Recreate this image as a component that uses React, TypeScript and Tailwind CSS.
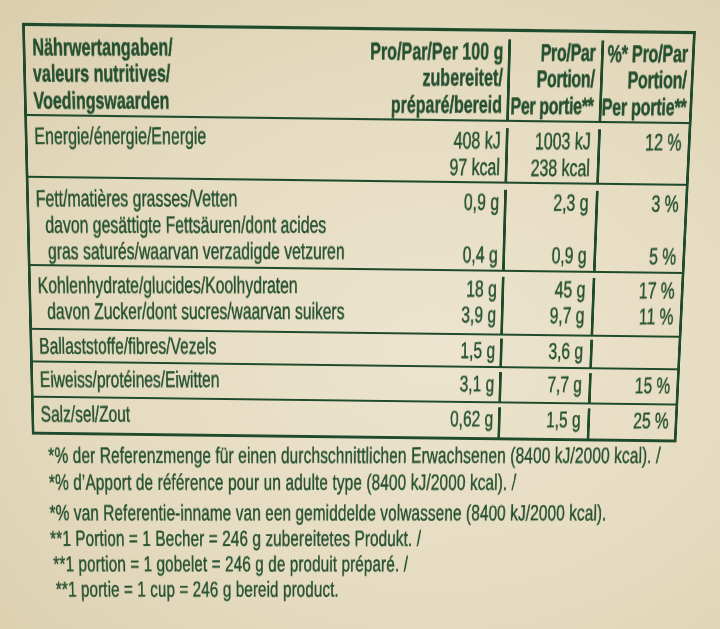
import type { ReactNode } from "react";

type Cell = (string | null)[];

type RowProps = {
  box: string; // height + padding classes
  label: ReactNode[];
  v1: Cell;
  v2: Cell;
  v3: Cell;
  last?: boolean;
};

// the label is photographed at a slant and set in a condensed face, so the
// whole sheet is laid out wide and squeezed / tilted by one transform.
// text lines are turned back so that only the rules keep the tilt.
const line = "whitespace-nowrap leading-[25.7px] rotate-[-0.48deg]";
const rule = "border-[#1f4b2c]";

const Lines = ({ items }: { items: Cell }) => (
  <>
    {items.map((t, i) => (
      <div key={i} className={line}>
        {t ?? "\u00a0"}
      </div>
    ))}
  </>
);

function Row({ box, label, v1, v2, v3, last }: RowProps) {
  return (
    <div className={`flex ${box} ${last ? "" : `border-b-2 ${rule}`}`}>
      <div className="flex w-[690px] justify-between pl-[10px] pr-[7px]">
        <div>
          {label.map((l, i) => (
            <div key={i} className={line}>
              {l}
            </div>
          ))}
        </div>
        <div className="text-right">
          <Lines items={v1} />
        </div>
      </div>
      <div className={`w-[133px] border-l-[4px] ${rule} pr-[10px] text-right`}>
        <Lines items={v2} />
      </div>
      <div className={`w-[130px] border-l-[4px] ${rule} pr-[9px] text-right`}>
        <Lines items={v3} />
      </div>
    </div>
  );
}

const notes = [
  { t: "*% der Referenzmenge für einen durchschnittlichen Erwachsenen (8400 kJ/2000 kcal). /", cls: "" },
  { t: "*% d\u2019Apport de référence pour un adulte type (8400 kJ/2000 kcal). /", cls: "mt-[1.5px]" },
  { t: "*% van Referentie-inname van een gemiddelde volwassene (8400 kJ/2000 kcal).", cls: "mt-[5px]" },
  { t: "**1 Portion = 1 Becher = 246 g zubereitetes Produkt. /", cls: "mt-[0.5px]" },
  { t: "**1 portion = 1 gobelet = 246 g de produit préparé. /", cls: "mt-[0.5px] pl-[4px]" },
  { t: "**1 portie = 1 cup = 246 g bereid product.", cls: "mt-[0.5px] pl-[7px]" },
];

export default function App() {
  return (
    <div className="h-[629px] w-[720px] overflow-hidden bg-[#e5dbc0] bg-[radial-gradient(ellipse_at_60%_55%,#ece4ce_0%,#e5dbc0_55%,#dacead_100%)] [font-family:'Liberation_Sans',Arial,sans-serif] text-[#24502f] [-webkit-text-stroke:0.45px_#24502f]">
      <div className="ml-[-170px] h-[629px] w-[1060px] pl-[43px] pt-[34px] [transform:perspective(1000px)_rotate(0.7deg)_rotateX(-6.2deg)_scaleX(0.68)]">
        <div className={`w-[961px] border-x-[4px] border-y-[3px] ${rule} text-[23px]`}>
          {/* header */}
          <div className={`flex h-[86px] border-b-2 ${rule} pt-[6.6px] font-bold`}>
            <div className="flex w-[690px] justify-between pl-[10px] pr-[7px]">
              <div>
                <div className={line}>Nährwertangaben/</div>
                <div className={line}>valeurs nutritives/</div>
                <div className={line}>Voedingswaarden</div>
              </div>
              <div className="text-right">
                <div className={line}>Pro/Par/Per 100 g</div>
                <div className={line}>zubereitet/</div>
                <div className={line}>préparé/bereid</div>
              </div>
            </div>
            <div className={`w-[133px] border-l-[4px] ${rule} pr-[8px] text-right tracking-[-0.5px]`}>
              <div className={line}>Pro/Par</div>
              <div className={line}>Portion/</div>
              <div className={line}>Per portie**</div>
            </div>
            <div className={`w-[130px] border-l-[4px] ${rule} pr-[6px] text-right tracking-[-0.3px]`}>
              <div className={line}>%* Pro/Par</div>
              <div className={line}>Portion/</div>
              <div className={line}>Per portie**</div>
            </div>
          </div>

          <Row
            box="h-[60px] pt-[6.4px]"
            label={["Energie/énergie/Energie"]}
            v1={["408 kJ", "97 kcal"]}
            v2={["1003 kJ", "238 kcal"]}
            v3={["12 %"]}
          />
          <Row
            box="h-[87px] pt-[6.3px]"
            label={[
              "Fett/matières grasses/Vetten",
              <span className="pl-[13px]">davon gesättigte Fettsäuren/dont acides</span>,
              <span className="pl-[16px]">gras saturés/waarvan verzadigde vetzuren</span>,
            ]}
            v1={["0,9 g", null, "0,4 g"]}
            v2={["2,3 g", null, "0,9 g"]}
            v3={["3 %", null, "5 %"]}
          />
          <Row
            box="h-[64px] pt-[4.8px]"
            label={[
              "Kohlenhydrate/glucides/Koolhydraten",
              <span className="pl-[13px]">davon Zucker/dont sucres/waarvan suikers</span>,
            ]}
            v1={["18 g", "3,9 g"]}
            v2={["45 g", "9,7 g"]}
            v3={["17 %", "11 %"]}
          />
          <Row
            box="h-[33px] pt-[2.6px]"
            label={["Ballaststoffe/fibres/Vezels"]}
            v1={["1,5 g"]}
            v2={["3,6 g"]}
            v3={[null]}
          />
          <Row
            box="h-[36px] pt-[4.1px]"
            label={["Eiweiss/protéines/Eiwitten"]}
            v1={["3,1 g"]}
            v2={["7,7 g"]}
            v3={["15 %"]}
          />
          <Row
            box="h-[35px] pt-[4.1px]"
            label={["Salz/sel/Zout"]}
            v1={["0,62 g"]}
            v2={["1,5 g"]}
            v3={["25 %"]}
            last
          />
        </div>

        {/* footnotes */}
        <div className="mt-[4px] pl-[24px] text-[23px] tracking-[0.2px]">
          {notes.map((n) => (
            <div key={n.t} className={`${n.cls} whitespace-nowrap leading-[26.5px] rotate-[-0.48deg]`}>
              {n.t}
            </div>
          ))}
        </div>
      </div>
    </div>
  );
}
